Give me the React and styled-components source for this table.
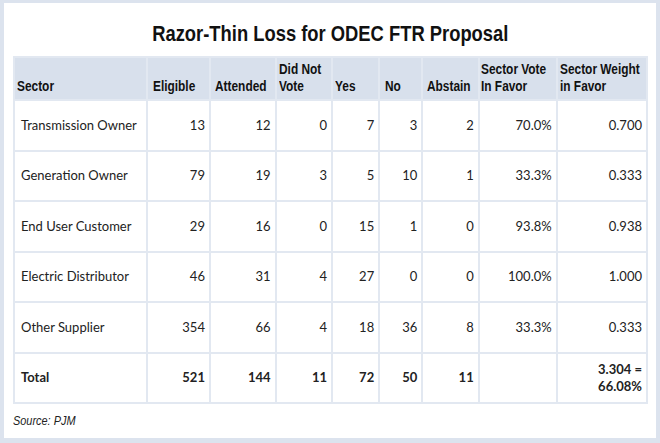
import React from 'react';
import styled, { createGlobalStyle } from 'styled-components';

const GlobalStyle = createGlobalStyle`
    html, body {
        margin: 0;
        padding: 0;
        background: #dce3ee;
    }
    body {
        width: 660px;
        height: 443px;
        overflow: hidden;
    }
`;

const Frame = styled.div`
    box-sizing: border-box;
    width: 660px;
    height: 443px;
    padding: 3px 4px 5px 4px;
`;

const Card = styled.div`
    box-sizing: border-box;
    height: 435px;
    background: #ffffff;
    padding: 0 0 0 9px;
    display: flex;
    flex-direction: column;
`;

// no narrow face is installed, so the condensed look is done by squeezing the glyphs
const Narrow = styled.span`
    display: inline-block;
    transform: scaleX(${(p) => p.$scale || 0.82});
    transform-origin: ${(p) => p.$origin || 'left'} center;
`;

const Title = styled.h1`
    margin: 0;
    height: 53px;
    padding: 19px 9px 0 0;
    box-sizing: border-box;
    text-align: center;
    font-family: 'Liberation Sans', Arial, sans-serif;
    font-weight: 700;
    font-size: 22px;
    line-height: 24px;
    color: #111111;
    white-space: nowrap;
`;

const Table = styled.table`
    width: 635px;
    table-layout: fixed;
    border-collapse: collapse;
    font-family: Lato, 'Liberation Sans', sans-serif;
    font-size: 13px;
    color: #222222;
`;

const HeadCell = styled.th`
    background: #d8e0ec;
    border: 2px solid #e2e8f1;
    height: 43px;
    box-sizing: border-box;
    padding: 0 0 4px ${(p) => p.$pad}px;
    vertical-align: bottom;
    text-align: left;
    font-family: 'Liberation Sans', Arial, sans-serif;
    font-weight: 700;
    font-size: 14.5px;
    line-height: 17px;
    color: #111111;
    white-space: nowrap;
`;

const Cell = styled.td`
    border: 2px solid #e2e8f1;
    height: 50.5px;
    box-sizing: border-box;
    padding: 0 4px 0 ${(p) => (p.$label ? 6 : 4)}px;
    text-align: ${(p) => (p.$label ? 'left' : 'right')};
    vertical-align: middle;
    font-weight: ${(p) => (p.$bold ? 700 : 400)};
    line-height: 17px;
    white-space: nowrap;
`;

const Source = styled.div`
    margin-top: 9px;
    font-family: 'Liberation Sans', Arial, sans-serif;
    font-style: italic;
    font-size: 13px;
    color: #222222;
`;

const columns = [
    { key: 'sector', label: ['Sector'], width: 130, pad: 2 },
    { key: 'eligible', label: ['Eligible'], width: 61, pad: 5 },
    { key: 'attended', label: ['Attended'], width: 64, pad: 4 },
    { key: 'dnv', label: ['Did Not', 'Vote'], width: 55, pad: 2 },
    { key: 'yes', label: ['Yes'], width: 46, pad: 2 },
    { key: 'no', label: ['No'], width: 42, pad: 5 },
    { key: 'abstain', label: ['Abstain'], width: 55, pad: 4 },
    { key: 'vote', label: ['Sector Vote', 'In Favor'], width: 76, pad: 1 },
    { key: 'weight', label: ['Sector Weight', 'in Favor'], width: 88, pad: 2 },
];

const rows = [
    ['Transmission Owner', '13', '12', '0', '7', '3', '2', '70.0%', '0.700'],
    ['Generation Owner', '79', '19', '3', '5', '10', '1', '33.3%', '0.333'],
    ['End User Customer', '29', '16', '0', '15', '1', '0', '93.8%', '0.938'],
    ['Electric Distributor', '46', '31', '4', '27', '0', '0', '100.0%', '1.000'],
    ['Other Supplier', '354', '66', '4', '18', '36', '8', '33.3%', '0.333'],
];

const totals = ['Total', '521', '144', '11', '72', '50', '11', '', ['3.304 =', '66.08%']];

const Lines = ({ parts }) =>
    parts.map((part, i) => (
        <React.Fragment key={i}>
            {i > 0 && <br />}
            {part}
        </React.Fragment>
    ));

const App = () => {
    return (
        <Frame>
            <GlobalStyle />
            <Card>
                <Title>
                    <Narrow $scale={0.835} $origin="center">
                        Razor-Thin Loss for ODEC FTR Proposal
                    </Narrow>
                </Title>
                <Table>
                    <colgroup>
                        {columns.map((c) => (
                            <col key={c.key} style={{ width: c.width }} />
                        ))}
                    </colgroup>
                    <thead>
                        <tr>
                            {columns.map((c) => (
                                <HeadCell key={c.key} $pad={c.pad}>
                                    <Narrow>
                                        <Lines parts={c.label} />
                                    </Narrow>
                                </HeadCell>
                            ))}
                        </tr>
                    </thead>
                    <tbody>
                        {rows.map((row) => (
                            <tr key={row[0]}>
                                {row.map((value, i) => (
                                    <Cell key={i} $label={i === 0}>
                                        {value}
                                    </Cell>
                                ))}
                            </tr>
                        ))}
                        <tr>
                            {totals.map((value, i) => (
                                <Cell key={i} $label={i === 0} $bold>
                                    {Array.isArray(value) ? <Lines parts={value} /> : value}
                                </Cell>
                            ))}
                        </tr>
                    </tbody>
                </Table>
                <Source>
                    <Narrow $scale={0.84}>Source: PJM</Narrow>
                </Source>
            </Card>
        </Frame>
    );
};

export default App;
